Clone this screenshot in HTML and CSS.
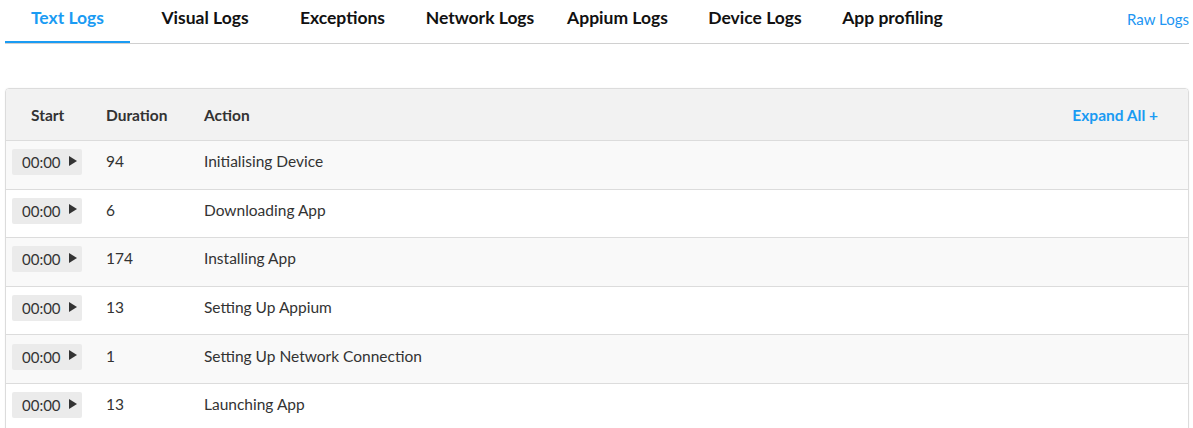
FILE: index.html
```html
<!DOCTYPE html>
<html lang="en">
<head>
<meta charset="utf-8">
<title>Text Logs</title>
<link rel="stylesheet" href="styles.css">
</head>
<body>
<nav class="tabs">
  <a class="tab active">Text Logs</a>
  <a class="tab">Visual Logs</a>
  <a class="tab">Exceptions</a>
  <a class="tab">Network Logs</a>
  <a class="tab">Appium Logs</a>
  <a class="tab">Device Logs</a>
  <a class="tab">App profiling</a>
  <a class="raw">Raw Logs</a>
</nav>
<section class="table">
  <div class="row head">
    <div class="c-start">Start</div>
    <div class="c-dur">Duration</div>
    <div class="c-act">Action</div>
    <div class="expand">Expand All +</div>
  </div>
  <div class="row odd">
    <div class="c-start"><span class="btn">00:00<i class="tri"></i></span></div>
    <div class="c-dur">94</div>
    <div class="c-act">Initialising Device</div>
  </div>
  <div class="row">
    <div class="c-start"><span class="btn">00:00<i class="tri"></i></span></div>
    <div class="c-dur">6</div>
    <div class="c-act">Downloading App</div>
  </div>
  <div class="row odd">
    <div class="c-start"><span class="btn">00:00<i class="tri"></i></span></div>
    <div class="c-dur">174</div>
    <div class="c-act">Installing App</div>
  </div>
  <div class="row">
    <div class="c-start"><span class="btn">00:00<i class="tri"></i></span></div>
    <div class="c-dur">13</div>
    <div class="c-act">Setting Up Appium</div>
  </div>
  <div class="row odd">
    <div class="c-start"><span class="btn">00:00<i class="tri"></i></span></div>
    <div class="c-dur">1</div>
    <div class="c-act">Setting Up Network Connection</div>
  </div>
  <div class="row">
    <div class="c-start"><span class="btn">00:00<i class="tri"></i></span></div>
    <div class="c-dur">13</div>
    <div class="c-act">Launching App</div>
  </div>
</section>
</body>
</html>
```

FILE: styles.css
```css
* { box-sizing: border-box; }
html, body { margin: 0; background: #fff; }
body {
  padding: 0 4px 0 5px;
  font-family: Lato, "Liberation Sans", sans-serif;
  color: #333;
  overflow: hidden;
}
.tabs {
  display: flex;
  align-items: flex-start;
  gap: 12.5px;
  border-bottom: 1px solid #d0d0d0;
  height: 44px;
}
.tab {
  width: 125px;
  height: 43px;
  padding-bottom: 7px;
  display: flex;
  align-items: center;
  justify-content: center;
  font-size: 17.5px;
  font-weight: 700;
  color: #111;
  border-bottom: 2px solid transparent;
  white-space: nowrap;
}
.tab.active {
  color: #1a9bf3;
  border-bottom-color: #1a9bf3;
}
.raw {
  margin-left: auto;
  height: 43px;
  padding-bottom: 5px;
  display: flex;
  align-items: center;
  font-size: 15px;
  color: #2196f3;
}
.table {
  margin-top: 44px;
  border: 1px solid #dcdcdc;
  border-radius: 4px;
  overflow: hidden;
  box-shadow: 0 0 2px rgba(0,0,0,0.05);
}
.row {
  display: grid;
  grid-template-columns: 90px 98px 1fr auto;
  align-items: center;
  height: 48.6px;
  padding-bottom: 7px;
  border-top: 1px solid #dcdcdc;
  font-size: 15.5px;
  background: #fff;
}
.row.odd { background: #f9f9f9; }
.row.head {
  height: 51px;
  padding-bottom: 0;
  border-top: none;
  background: #f2f2f2;
  font-weight: 700;
  color: #333;
}
.head .c-start { padding-left: 25px; }
.c-start { padding-left: 6px; }
.c-dur { padding-left: 10px; }
.c-act { padding-left: 10px; }
.expand {
  padding-right: 30px;
  color: #1a9bf3;
  font-weight: 700;
}
.btn {
  display: inline-flex;
  align-items: center;
  width: 70px;
  height: 26px;
  margin-top: 2px;
  padding-left: 10px;
  background: #ebebeb;
  border-radius: 2px;
  color: #333;
  font-size: 15px;
}
.tri {
  display: inline-block;
  width: 0;
  height: 0;
  margin-left: 8px;
  margin-top: -3px;
  border-left: 8px solid #333;
  border-top: 5px solid transparent;
  border-bottom: 5px solid transparent;
}
```
